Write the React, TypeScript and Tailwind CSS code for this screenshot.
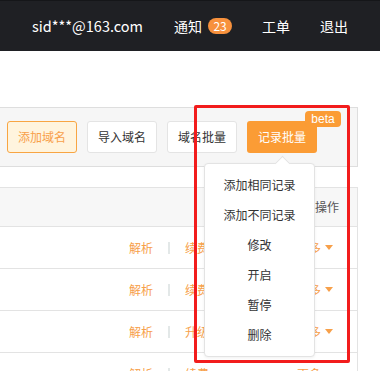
import React from "react";

const cjk = { fontFamily: '"Noto Sans CJK SC", "Noto Sans", sans-serif' };

function Caret() {
  return (
    <svg width="8" height="5" viewBox="0 0 8 5" className="ml-[4px]">
      <path d="M0 0 L8 0 L4 5 Z" fill="#f7a04a" />
    </svg>
  );
}

function Row({ second }: { second: string }) {
  return (
    <div className="flex h-[42px] items-center border-b border-[#e3e3e3] pl-[129px] pr-[24px] text-[12px] text-[#f7a04a]">
      <span>解析</span>
      <span className="mx-[15px] h-[12px] w-[2px] bg-[#e3e8e8]" />
      <span>{second}</span>
      <span className="flex-1" />
      <span>更多</span>
      <Caret />
    </div>
  );
}

export default function App() {
  const items = ["添加相同记录", "添加不同记录", "修改", "开启", "暂停", "删除"];
  return (
    <div className="relative h-[371px] w-[380px] overflow-hidden bg-white" style={cjk}>
      <div className="flex h-[51px] items-center border-t border-[#151619] bg-[#1f2024] text-[14px] text-white">
        <span className="ml-[32px]" style={{ fontFamily: '"Noto Sans CJK SC", sans-serif', fontSize: "14.5px" }}>sid***@163.com</span>
        <span className="ml-[31px]">通知</span>
        <span className="ml-[6px] flex h-[16px] w-[24px] items-center justify-center rounded-full bg-[#f7913d] text-[12px] leading-none">23</span>
        <span className="ml-[30px]">工单</span>
        <span className="ml-[30px]">退出</span>
      </div>

      <div className="mt-[56px] flex h-[60px] w-[358px] items-center gap-[10px] border-y border-r border-[#dedede] bg-[#f6f6f6] pl-[7px] text-[12px]">
        <button className="h-[32px] w-[70px] rounded-[3px] border border-[#f8a543] bg-[#fff4de] text-[#f8a04a]">添加域名</button>
        <button className="h-[32px] w-[70px] rounded-[3px] border border-[#e4e4e4] bg-white text-[#333]">导入域名</button>
        <button className="h-[32px] w-[70px] rounded-[3px] border border-[#e4e4e4] bg-white text-[#333]">域名批量</button>
        <button className="relative h-[32px] w-[70px] rounded-[3px] bg-[#fb9c35] text-white">
          记录批量
          <span className="absolute left-[58px] top-[-10px] flex h-[16px] w-[36px] items-center justify-center rounded-[4px] bg-[#fb9c35] text-[12px] leading-none text-white" style={{ fontFamily: '"Liberation Sans", sans-serif' }}>beta</span>
        </button>
      </div>

      <div className="mt-[20px] w-[358px] border-r border-[#e3e3e3]">
        <div className="flex h-[40px] items-center border-y border-[#e3e3e3] bg-[#f7f7f7] pl-[315px] text-[12px] text-[#555]">操作</div>
        <Row second="续费" />
        <Row second="续费" />
        <Row second="升级" />
        <Row second="续费" />
      </div>

      {/* dropdown */}
      <div className="absolute left-[204px] top-[163px] w-[111px] rounded-[4px] border border-[#e3e3e3] bg-white py-[6px] text-[12px] text-[#333] shadow-[0_1px_3px_rgba(0,0,0,0.06)]">
        <div className="absolute left-[72px] top-[-6px] h-[11px] w-[11px] rotate-45 border-l border-t border-[#e3e3e3] bg-white" />
        {items.map((t) => (
          <div key={t} className="flex h-[30px] items-center justify-center">{t}</div>
        ))}
      </div>

      {/* red highlight */}
      <div className="absolute left-[194px] top-[105px] h-[258px] w-[156px] rounded-[2px] border-[3px] border-[#f21c1c]" />
    </div>
  );
}
